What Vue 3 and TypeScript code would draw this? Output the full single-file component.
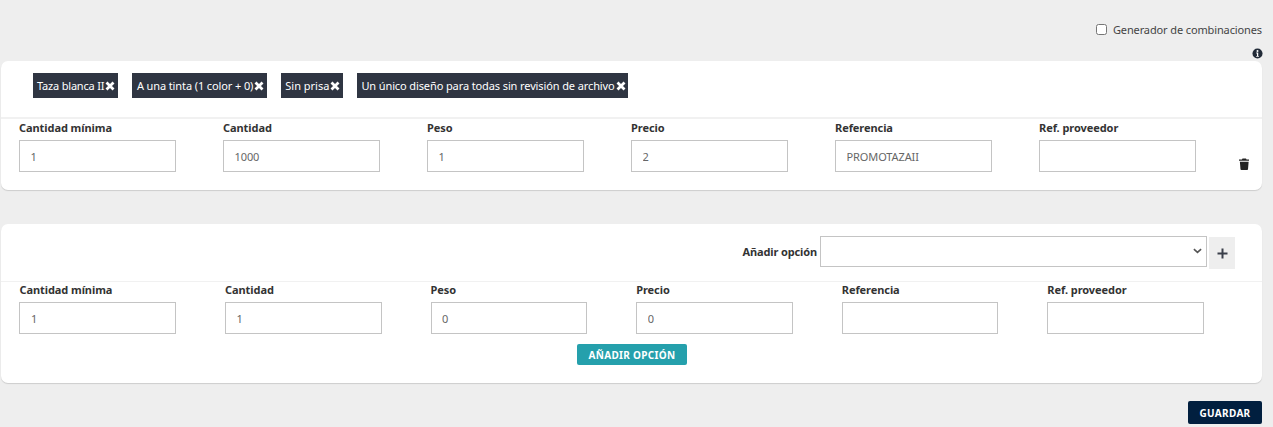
<script setup lang="ts">
interface Field { label: string; value: string }
const tags: string[] = ['Taza blanca II', 'A una tinta (1 color + 0)', 'Sin prisa', 'Un único diseño para todas sin revisión de archivo']
const first: Field[] = [
  { label: 'Cantidad mínima', value: '1' },
  { label: 'Cantidad', value: '1000' },
  { label: 'Peso', value: '1' },
  { label: 'Precio', value: '2' },
  { label: 'Referencia', value: 'PROMOTAZAII' },
  { label: 'Ref. proveedor', value: '' },
]
const second: Field[] = [
  { label: 'Cantidad mínima', value: '1' },
  { label: 'Cantidad', value: '1' },
  { label: 'Peso', value: '0' },
  { label: 'Precio', value: '0' },
  { label: 'Referencia', value: '' },
  { label: 'Ref. proveedor', value: '' },
]
</script>

<template>
  <div class="page">
    <div class="top">
      <label class="gen"><input type="checkbox" class="check" /><span>Generador de combinaciones</span></label>
    </div>
    <div class="info-row">
      <svg class="info" viewBox="0 0 12 12" width="11" height="11">
        <circle cx="6" cy="6" r="5.5" fill="#222b38" />
        <circle cx="6" cy="3.2" r="1.1" fill="#fff" />
        <path d="M4.6 5h2.2v3.6h.7v1H4.6v-1h.8V6h-.8z" fill="#fff" />
      </svg>
    </div>

    <section class="card card-one">
      <div class="tags">
        <span v-for="t in tags" :key="t" class="tag">
          <span class="tag-text">{{ t }}</span>
          <svg class="x" viewBox="0 0 10 10" width="10" height="10"><path d="M1.5 1.500l7 7M8.500 1.500l-7 7" stroke="#fff" stroke-width="2.800" fill="none" /></svg>
        </span>
      </div>
      <div class="fields fields-one">
        <div v-for="f in first" :key="f.label" class="field">
          <div class="lbl">{{ f.label }}</div>
          <input class="inp" type="text" :value="f.value" />
        </div>
        <svg class="trash" viewBox="0 0 12 14" width="10.500" height="12.500">
          <path d="M4 0.5h4l.6 1H12v1.600H0V1.500h3.400z" fill="#222" />
          <path d="M1 4.200h10l-.7 8.600a1 1 0 0 1-1 .9H2.700a1 1 0 0 1-1-.9z" fill="#222" />
        </svg>
      </div>
    </section>

    <section class="card card-two">
      <div class="add-row">
        <span class="add-lbl">Añadir opción</span>
        <span class="sel-wrap">
          <select class="sel"><option></option></select>
          <svg class="chev" viewBox="0 0 10 6" width="9" height="6"><path d="M1 1l4 3.500L9 1" stroke="#555" stroke-width="1.800" fill="none" /></svg>
        </span>
        <span class="plus">
          <svg viewBox="0 0 11 11" width="11" height="11"><path d="M5.500 .5v10M.5 5.500h10" stroke="#3a3f4a" stroke-width="2" /></svg>
        </span>
      </div>
      <div class="fields fields-two">
        <div v-for="f in second" :key="f.label" class="field">
          <div class="lbl">{{ f.label }}</div>
          <input class="inp" type="text" :value="f.value" />
        </div>
      </div>
      <div class="btn-row"><button class="btn teal" type="button">AÑADIR OPCIÓN</button></div>
    </section>

    <div class="save-row"><button class="btn navy" type="button">GUARDAR</button></div>
  </div>
</template>

<style>
html, body { margin: 0; background: #eeeeee; }
</style>

<style scoped>
.page {
  width: 1273px;
  height: 427px;
  overflow: hidden;
  box-sizing: border-box;
  background: #eeeeee;
  font-family: "Noto Sans", "Open Sans", sans-serif;
  font-size: 11px;
  color: #333;
  padding: 0 11px 0 1px;
}
.top {
  display: flex;
  justify-content: flex-end;
  padding-top: 22px;
  height: 24px;
}
.gen { display: flex; align-items: center; height: 14px; color: #444; font-size: 11px; letter-spacing: -0.12px; }
.check {
  appearance: none;
  width: 11px; height: 11px;
  margin: 0 6px 0 0;
  border: 1px solid #767676;
  border-radius: 2.500px;
  background: #fff;
  box-sizing: border-box;
}
.info-row { display: flex; justify-content: flex-end; height: 15px; padding-top: 2px; box-sizing: border-box; }
.info { display: block; margin-right: -0.500px; }
.card {
  background: #fff;
  border-radius: 7px;
  box-shadow: 0 1px 1px rgba(0,0,0,.14);
  box-sizing: border-box;
}
.card-one { height: 129px; }
.tags {
  display: flex;
  gap: 14px;
  padding: 12px 0 0 32px;
  height: 58px;
  box-sizing: border-box;
  border-bottom: 2px solid #f1f1f1;
}
.tag {
  display: inline-flex;
  align-items: center;
  gap: 1px;
  height: 25px;
  padding: 0 3px 0 4px;
  background: #2f3542;
  color: #fff;
  font-size: 11px;
  white-space: nowrap;
}
.tag + .tag { padding: 0 2.400px 0 4.600px; }
.tag-text { letter-spacing: -0.11px; }
.tag:first-child .tag-text { letter-spacing: -0.19px; }
.tag:nth-child(3) .tag-text { letter-spacing: 0; }
.x { display: block; }
.fields { display: grid; position: relative; }
.fields-one { grid-template-columns: repeat(6, 204px); padding: 1px 0 0 18px; }
.fields-two { grid-template-columns: repeat(6, 205.600px); padding-left: 18.400px; }
.fields-two .inp { width: 156.600px; }
.lbl { font-weight: 700; font-size: 11px; color: #333; height: 20px; line-height: 16px; letter-spacing: -0.07px; }
.inp {
  display: block;
  width: 157px;
  height: 32px;
  padding: 0 10.500px;
  box-sizing: border-box;
  border: 1px solid #c4c4c4;
  background: #fff;
  font-family: inherit;
  font-size: 11px;
  letter-spacing: -0.1px;
  color: #666;
  border-radius: 0;
  outline: none;
}
.trash { position: absolute; left: 1237.500px; top: 39px; }
.card-two { margin-top: 34px; height: 159px; }
.add-row {
  display: flex;
  align-items: flex-start;
  justify-content: flex-end;
  height: 58px;
  padding-right: 27px;
  padding-top: 12px;
  border-bottom: 1px solid #f1f1f1;
  box-sizing: border-box;
}
.add-lbl { font-weight: 700; font-size: 11px; margin-right: 3px; color: #333; line-height: 31px; letter-spacing: -0.13px; }
.sel-wrap { position: relative; display: block; margin-right: 2px; height: 31px; }
.sel {
  display: block;
  appearance: none;
  width: 387px;
  height: 31px;
  border: 1px solid #c4c4c4;
  border-radius: 0;
  background: #fff;
  font-family: inherit;
  font-size: 11px;
  box-sizing: border-box;
}
.chev { position: absolute; right: 5px; top: 12px; }
.plus {
  width: 26px; height: 32px;
  margin-top: 1px;
  background: #eeeeee;
  display: flex; align-items: center; justify-content: center;
}
.btn-row { display: flex; justify-content: center; padding-top: 10px; width: 1262px; box-sizing: border-box; }
.btn {
  border: none;
  border-radius: 2px;
  color: #fff;
  font-family: inherit;
  font-weight: 700;
  font-size: 10px;
  letter-spacing: .32px;
  height: 21px;
  padding: 0;
}
.teal { background: #25a0ac; width: 110px; }
.navy { background: #011f3f; width: 74px; height: 23px; }
.save-row { display: flex; justify-content: flex-end; padding-top: 18px; }
</style>
